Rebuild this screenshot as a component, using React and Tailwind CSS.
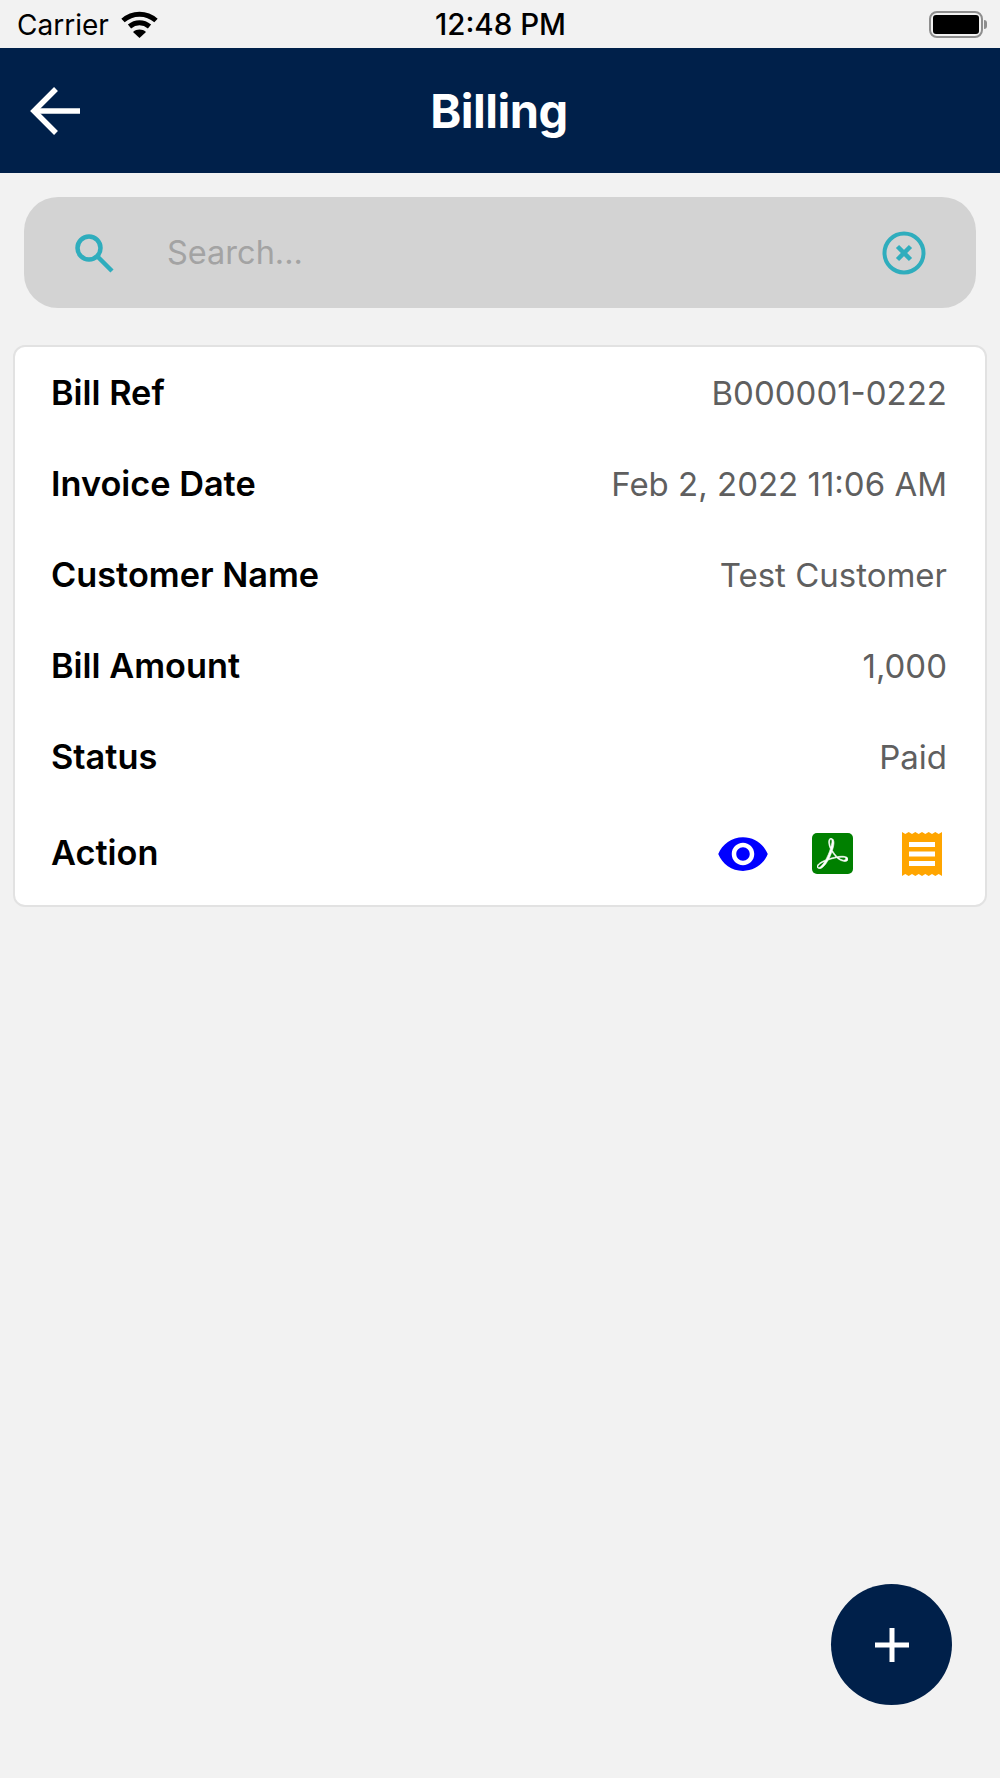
import React from "react";
import { MdVisibility } from "react-icons/md";
import { SiAdobeacrobatreader } from "react-icons/si";

const rows = [
  { label: "Bill Ref", value: "B000001-0222" },
  { label: "Invoice Date", value: "Feb 2, 2022 11:06 AM" },
  { label: "Customer Name", value: "Test Customer" },
  { label: "Bill Amount", value: "1,000" },
  { label: "Status", value: "Paid" },
];

function Wifi() {
  return (
    <svg width="37" height="27" viewBox="0 0 37 27" fill="none" stroke="#000" strokeWidth="5">
      <path d="M2 9.5C11.5 1 25.5 1 35 9.5" />
      <path d="M8.5 15.5C14.5 10.5 22.5 10.5 28.5 15.5" />
      <path d="M12 21 18.5 27 25 21C21 17.8 16 17.8 12 21Z" fill="#000" stroke="none" />
    </svg>
  );
}

function Battery() {
  return (
    <div className="flex items-center gap-[1px]">
      <div className="w-[54px] h-[27px] rounded-[8px] border-[2px] border-[#8e8e8e] p-[2px]">
        <div className="w-full h-full rounded-[3px] bg-black" />
      </div>
      <div className="w-[3px] h-[9px] rounded-r-full bg-[#8e8e8e]" />
    </div>
  );
}

function ReceiptIcon() {
  return (
    <svg width="40" height="44" viewBox="0 0 40 44">
      <path
        fill="#ffa500"
        d="M0 0 3.3 2 6.7 0 10 2 13.3 0 16.7 2 20 0 23.3 2 26.7 0 30 2 33.3 0 36.7 2 40 0V44L36.7 42 33.3 44 30 42 26.7 44 23.3 42 20 44 16.7 42 13.3 44 10 42 6.7 44 3.3 42 0 44Z"
      />
      <path fill="#fff" d="M7 10H33V15H7ZM7 19.500H33V24.500H7ZM7 29H33V34H7Z" />
    </svg>
  );
}

export default function App() {
  return (
    <div
      className="relative h-[1778px] w-[1000px] overflow-hidden bg-[#f2f2f2]"
      style={{ fontFamily: "Inter, 'Liberation Sans', sans-serif" }}
    >
      {/* status bar */}
      <div className="h-12 flex items-center justify-between pl-[17px] pr-[13px] text-black">
        <div className="flex-1 flex items-center gap-[12px]">
          <span className="text-[28px] leading-none pt-[2px]">Carrier</span>
          <Wifi />
        </div>
        <span className="text-[29.500px] leading-none font-medium pt-[2px] pr-[3px]">12:48 PM</span>
        <div className="flex-1 flex justify-end">
          <Battery />
        </div>
      </div>

      {/* header */}
      <div className="h-[125px] bg-[#00204a] flex items-center pl-[30px]">
        <svg width="50" height="48" viewBox="0 0 50 48" fill="none" stroke="#fff" strokeWidth="5.500">
          <path d="M50 24H4" />
          <path d="M26 2 4 24 26 46" />
        </svg>
        <h1 className="flex-1 text-center text-[47px] leading-none font-bold text-white pr-[82px] tracking-[-0.5px]">
          Billing
        </h1>
      </div>

      {/* search */}
      <div className="mx-6 mt-6 h-[111px] rounded-[34px] bg-[#d3d3d3] flex items-center pl-[50px] pr-[50px]">
        <svg width="40" height="40" viewBox="0 0 40 40" fill="none" stroke="#2fadbd" strokeWidth="4.500">
          <circle cx="15" cy="15" r="11.500" />
          <path d="M23 23 38 38" />
        </svg>
        <span className="ml-[53px] flex-1 text-[32.500px] leading-none text-[#a3a3a3] pt-[2px]">Search...</span>
        <svg width="44" height="44" viewBox="0 0 44 44" fill="none" stroke="#2fadbd">
          <circle cx="22" cy="22" r="19.500" strokeWidth="4" />
          <path d="M15.500 15.500 28.500 28.500M28.500 15.500 15.500 28.500" strokeWidth="4.500" />
        </svg>
      </div>

      {/* bill card */}
      <div className="mx-[13px] mt-[37px] h-[562px] rounded-[12px] border-2 border-[#e2e2e2] bg-white pt-[1px] pl-[36px] pr-[38px]">
        {rows.map((row) => (
          <div key={row.label} className="h-[91px] flex items-center justify-between">
            <span className="text-[34.300px] leading-none font-semibold text-black">{row.label}</span>
            <span className="text-[33px] leading-none text-[#5f5f5f]">{row.value}</span>
          </div>
        ))}
        <div className="h-[101px] flex items-center justify-between">
          <span className="text-[34.300px] leading-none font-semibold text-black">Action</span>
          <div className="flex items-center mr-[5px]">
            <MdVisibility size={54} color="#0000ff" />
            <div className="ml-[42px] w-[41px] h-[41px] rounded-[5px] bg-[#008000] flex items-center justify-center">
              <SiAdobeacrobatreader size={31} color="#fff" stroke="#fff" strokeWidth={0.5} />
            </div>
            <div className="ml-[49px]">
              <ReceiptIcon />
            </div>
          </div>
        </div>
      </div>

      {/* add button */}
      <button className="absolute left-[831px] top-[1584px] w-[121px] h-[121px] rounded-full bg-[#00204a] flex items-center justify-center">
        <svg width="34" height="34" viewBox="0 0 34 34" stroke="#fff" strokeWidth="5" fill="none">
          <path d="M17 0V34M0 17H34" />
        </svg>
      </button>
    </div>
  );
}
